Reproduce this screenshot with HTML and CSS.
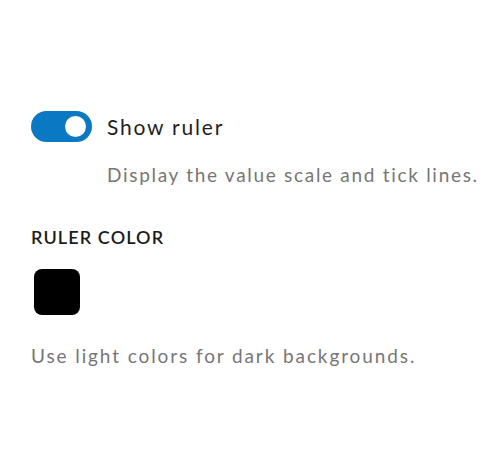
FILE: index.html
```html
<!DOCTYPE html>
<html>
<head>
<meta charset="utf-8">
<link rel="stylesheet" href="styles.css">
</head>
<body>
<div class="panel">
  <div class="toggle-row">
    <span class="toggle"><span class="knob"></span></span>
    <span class="toggle-label">Show ruler</span>
  </div>
  <p class="toggle-desc">Display the value scale and tick lines.</p>
  <h3 class="section-title">RULER COLOR</h3>
  <div class="swatch"></div>
  <p class="hint">Use light colors for dark backgrounds.</p>
</div>
</body>
</html>
```
FILE: styles.css
```css
html, body {
  margin: 0;
  padding: 0;
  background: #ffffff;
}
body {
  font-family: Lato, "Open Sans", sans-serif;
  line-height: 1.2;
}
.panel {
  padding: 111px 0 0 31px;
  display: flex;
  flex-direction: column;
  align-items: flex-start;
}
.toggle-row {
  display: flex;
  align-items: center;
  gap: 15px;
  height: 31px;
}
.toggle {
  width: 61px;
  height: 31px;
  border-radius: 16px;
  background: #0a78c2;
  display: flex;
  align-items: center;
  justify-content: flex-end;
  padding: 0 6px;
  box-sizing: border-box;
}
.knob {
  width: 21px;
  height: 21px;
  border-radius: 50%;
  background: #ffffff;
}
.toggle-label {
  font-size: 21px;
  letter-spacing: 1.8px;
  color: #1f1f1f;
}
.toggle-desc {
  margin: 22px 0 0 76px;
  font-size: 19px;
  letter-spacing: 1.7px;
  color: #767676;
}
.section-title {
  margin: 40px 0 0 0;
  font-size: 18px;
  font-weight: 600;
  letter-spacing: 1.1px;
  color: #1c1c1c;
}
.swatch {
  margin: 21px 0 0 3px;
  width: 46px;
  height: 46px;
  border-radius: 8px;
  background: #000000;
}
.hint {
  margin: 30px 0 0 0;
  font-size: 19px;
  letter-spacing: 1.9px;
  color: #767676;
}
```
